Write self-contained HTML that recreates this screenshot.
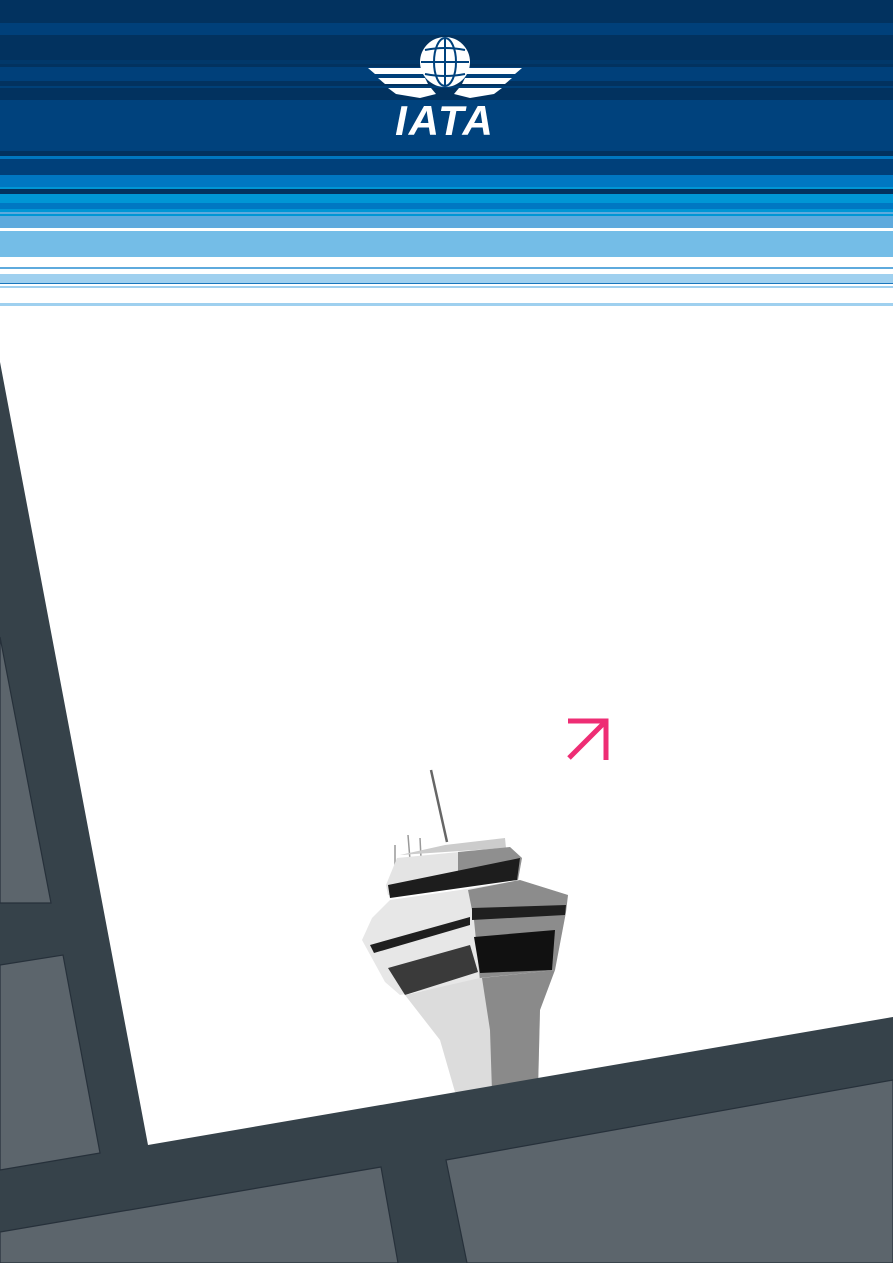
<!DOCTYPE html>
<html><head><meta charset="utf-8"><style>
html,body{margin:0;padding:0;width:893px;height:1263px;overflow:hidden;background:#fff}
svg{display:block}
</style></head><body>
<svg width="893" height="1263" viewBox="0 0 893 1263" xmlns="http://www.w3.org/2000/svg">
<rect width="893" height="1263" fill="#fff"/>
<rect y="0" width="893" height="23" fill="#02325f"/>
<rect y="23" width="893" height="12" fill="#00407a"/>
<rect y="35" width="893" height="25" fill="#02325f"/>
<rect y="60" width="893" height="4" fill="#01386a"/>
<rect y="64" width="893" height="3" fill="#02325f"/>
<rect y="67" width="893" height="14" fill="#00407a"/>
<rect y="81" width="893" height="5" fill="#02325f"/>
<rect y="86" width="893" height="2" fill="#004078"/>
<rect y="88" width="893" height="12" fill="#02325f"/>
<rect y="100" width="893" height="51" fill="#00427d"/>
<rect y="151" width="893" height="5" fill="#02325f"/>
<rect y="156" width="893" height="3" fill="#0077c0"/>
<rect y="159" width="893" height="16" fill="#00407a"/>
<rect y="175" width="893" height="12" fill="#0077c2"/>
<rect y="187" width="893" height="2" fill="#0096d5"/>
<rect y="189" width="893" height="5" fill="#02325f"/>
<rect y="194" width="893" height="9" fill="#0096d5"/>
<rect y="203" width="893" height="6" fill="#0077c2"/>
<rect y="209" width="893" height="3" fill="#0096d5"/>
<rect y="212" width="893" height="2" fill="#5faadd"/>
<rect y="214" width="893" height="2" fill="#0096d5"/>
<rect y="216" width="893" height="12" fill="#5eaadd"/>
<rect y="231" width="893" height="26" fill="#74bde7"/>
<rect y="267" width="893" height="2" fill="#5eaadd"/>
<rect y="274" width="893" height="9" fill="#9fd0ef"/>
<rect y="283" width="893" height="1" fill="#1a77bd"/>
<rect y="286" width="893" height="2" fill="#9fd0ef"/>
<rect y="303" width="893" height="3" fill="#9fd0ef"/>

<g>
<circle cx="445" cy="62" r="25" fill="#fff"/>
<g fill="none" stroke="#00427d" stroke-width="2">
<ellipse cx="445" cy="62" rx="11" ry="24"/>
<line x1="445" y1="38" x2="445" y2="86"/>
<line x1="421" y1="62" x2="469" y2="62"/>
<path d="M425 50 Q445 46 465 50"/>
<path d="M425 74 Q445 78 465 74"/>
</g>
<g fill="#fff">
<path d="M368 68 L422 68 L424 74 L375 74 Z"/>
<path d="M378 78 L425 78 L428 84 L385 84 Z"/>
<path d="M388 88 L431 88 L436 94 L420 98 L396 94 Z"/>
<path d="M522 68 L468 68 L466 74 L515 74 Z"/>
<path d="M512 78 L465 78 L462 84 L505 84 Z"/>
<path d="M502 88 L459 88 L454 94 L470 98 L494 94 Z"/>
</g>
<text x="445" y="135" text-anchor="middle" font-family="Liberation Sans, sans-serif" font-weight="bold" font-style="italic" font-size="42" fill="#fff" letter-spacing="2">IATA</text>
</g>

<g stroke="#ee2d74" stroke-width="5" fill="none">
<line x1="569" y1="758" x2="605" y2="722"/>
<polyline points="568,721 606,721 606,760"/>
</g>

<g>
<line x1="431" y1="770" x2="447" y2="842" stroke="#666" stroke-width="2.5"/>
<g stroke="#999" stroke-width="1.5">
<line x1="395" y1="845" x2="395" y2="865"/><line x1="408" y1="835" x2="410" y2="860"/>
<line x1="420" y1="838" x2="421" y2="858"/>
</g>
<path d="M400 855 L445 845 L505 838 L506 848 L445 852 Z" fill="#ccc"/>
<polygon points="397,858 510,847 522,858 518,880 388,895 386,885" fill="#e4e4e4"/>
<polygon points="458,852 510,847 522,858 518,880 458,886" fill="#8f8f8f"/>
<polygon points="388,885 520,858 517,880 390,898" fill="#1d1d1d"/>
<polygon points="362,940 372,918 390,900 460,890 520,880 568,895 566,912 555,970 480,980 400,995 385,982" fill="#e7e7e7"/>
<polygon points="468,890 520,880 568,895 566,912 555,970 480,981 474,920" fill="#8c8c8c"/>
<polygon points="370,945 470,917 470,925 374,953" fill="#1f1f1f"/>
<polygon points="472,908 566,905 565,915 472,920" fill="#1f1f1f"/>
<polygon points="388,968 470,945 478,972 405,995" fill="#3a3a3a"/>
<polygon points="474,937 555,930 552,970 480,973" fill="#111"/>
<polygon points="405,995 480,978 555,970 540,1010 538,1090 455,1092 440,1040" fill="#dcdcdc"/>
<polygon points="482,978 555,970 540,1010 538,1090 492,1092 490,1030" fill="#8a8a8a"/>
</g>

<polygon points="0,362 148,1145 893,1017 893,1263 0,1263" fill="#36424a"/>
<g fill="#5c656c" stroke="#26303a" stroke-width="1.2">
<polygon points="0,637 51,903 0,903"/>
<polygon points="0,965 63,955 100,1153 0,1170"/>
<polygon points="0,1232 381,1167 398,1263 0,1263"/>
<polygon points="446,1160 893,1080 893,1263 467,1263"/>
</g>
</svg>
</body></html>
